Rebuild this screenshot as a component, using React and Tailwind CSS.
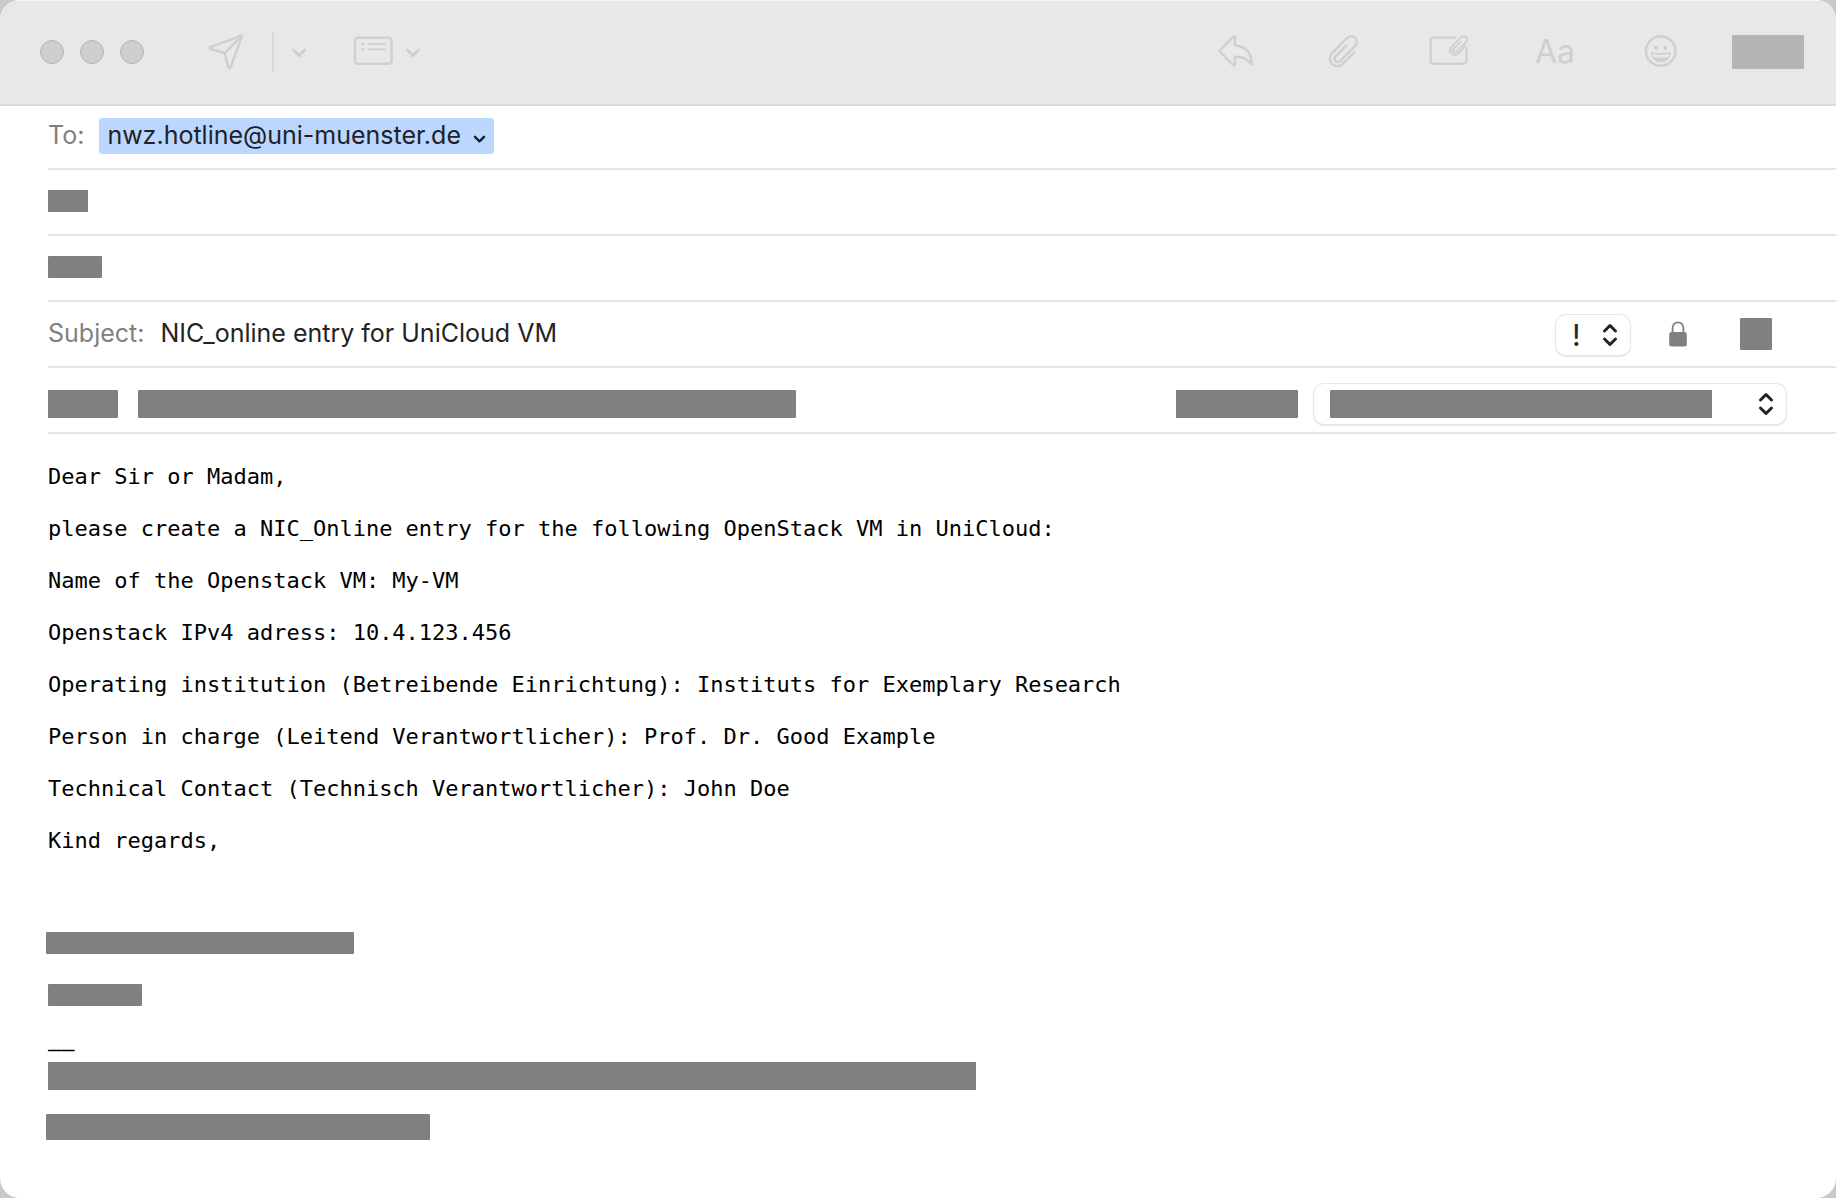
import React, { useState } from 'react';

const bodyLines = [
    'Dear Sir or Madam,',
    'please create a NIC_Online entry for the following OpenStack VM in UniCloud:',
    'Name of the Openstack VM: My-VM',
    'Openstack IPv4 adress: 10.4.123.456',
    'Operating institution (Betreibende Einrichtung): Instituts for Exemplary Research',
    'Person in charge (Leitend Verantwortlicher): Prof. Dr. Good Example',
    'Technical Contact (Technisch Verantwortlicher): John Doe',
    'Kind regards,',
];

const CLIP_PATH = 'M31.3 20.4 L19 32.4 A7.4 7.4 0 0 1 8.4 22.2 L24 6 A5.6 5.6 0 0 1 32.2 13.8 L17.2 29 A3.2 3.2 0 0 1 12.4 24.6 L23.6 13.4';

// Every toolbar icon is drawn on the same 40px grid
function ToolIcon({ children }) {
    return (
        <svg className="size-10" viewBox="0 0 40 40" fill="none" stroke="currentColor" strokeWidth="2.4" strokeLinecap="round" strokeLinejoin="round" aria-hidden="true">
            {children}
        </svg>
    );
}

function Chevron({ className }) {
    return (
        <svg className={className} viewBox="0 0 16 16" fill="none" stroke="currentColor" strokeWidth="3" strokeLinecap="round" strokeLinejoin="round" aria-hidden="true">
            <path d="M2.4 6 L8 11.6 L13.6 6" />
        </svg>
    );
}

function UpDown({ className }) {
    return (
        <svg className={className} viewBox="0 0 16 24" fill="none" stroke="currentColor" strokeWidth="3" strokeLinecap="round" strokeLinejoin="round" aria-hidden="true">
            <path d="M2.5 8 L8 2.5 L13.5 8 M2.5 16 L8 21.5 L13.5 16" />
        </svg>
    );
}

// Blanked out text
function Redacted({ className }) {
    return <div className={`shrink-0 rounded-[1px] bg-[#7f8081] ${className}`} />;
}

function Toolbar() {
    return (
        <header className="flex items-center border-b-2 border-[#d9d9d9] bg-[#e8e8e8] py-8 pl-10 pr-8 text-[#cfcfcf] shadow-[inset_0_1px_0_#f6f6f6]">
            <div className="flex gap-4">
                <button aria-label="Close" className="size-6 rounded-full border border-[#b6b6b6] bg-[#cfcfcf]" />
                <button aria-label="Minimize" className="size-6 rounded-full border border-[#b6b6b6] bg-[#cfcfcf]" />
                <button aria-label="Zoom" className="size-6 rounded-full border border-[#b6b6b6] bg-[#cfcfcf]" />
            </div>
            <button aria-label="Send" className="ml-[62px]">
                <ToolIcon>
                    <path d="M36.2 3.4 L4.2 15.2 Q3 16.3 4.5 17 L18.7 21 L22.4 35.4 Q23.6 37 24.7 35.4 Z" />
                    <path d="M18.7 21 L36 3.6" />
                </ToolIcon>
            </button>
            <div className="ml-[26px] h-10 w-0.5 bg-[#dadada]" />
            <button aria-label="Send options" className="ml-[17px]">
                <Chevron className="size-4" />
            </button>
            <button aria-label="Header fields" className="ml-[46px]">
                <ToolIcon>
                    <rect x="2" y="5.8" width="36.6" height="26" rx="3" />
                    <path d="M9.2 12.2 H11 M15.6 12.2 H31.6 M9.2 17.4 H11 M15.6 17.4 H31.6" strokeWidth="1.8" />
                </ToolIcon>
            </button>
            <button aria-label="Header field options" className="ml-3">
                <Chevron className="size-4" />
            </button>
            <div className="ml-auto flex items-center gap-[66px]">
                <button aria-label="Reply">
                    <ToolIcon>
                        <path d="M2.4 19 L15.8 5.4 Q18 3.4 18 6 V13.8 C28 13.6 34.9 21 34.9 32.8 C31 26.4 26 24.5 18 24.8 V32 Q18 34.4 15.8 32.6 Z" />
                    </ToolIcon>
                </button>
                <button aria-label="Attach file">
                    <ToolIcon>
                        <path d={CLIP_PATH} />
                    </ToolIcon>
                </button>
                <button aria-label="Include attachments">
                    <ToolIcon>
                        <path d="M25.5 5.6 H5 A3.4 3.4 0 0 0 1.6 9 V28.4 A3.4 3.4 0 0 0 5 31.8 H34.2 A3.4 3.4 0 0 0 37.6 28.4 V17" />
                        <path d={CLIP_PATH} transform="translate(16.8 1.4) scale(.63)" strokeWidth="3" />
                    </ToolIcon>
                </button>
                <button aria-label="Format" className="flex w-10 justify-center text-[32px] leading-10">Aa</button>
                <button aria-label="Emoji">
                    <ToolIcon>
                        <circle cx="19.7" cy="19" r="14.8" />
                        <ellipse cx="15" cy="15.7" rx="1.9" ry="2.3" fill="currentColor" stroke="none" />
                        <ellipse cx="24.4" cy="15.7" rx="1.9" ry="2.3" fill="currentColor" stroke="none" />
                        <path d="M10.6 20.8 Q19.8 23.2 29 20.8 C28.6 27 24.4 29.6 19.8 29.6 S11 27 10.6 20.8 Z" strokeWidth="1.4" />
                        <path d="M11.8 24.8 Q19.8 27 27.8 24.8 C26.4 28.2 23.4 29.4 19.8 29.4 S13.2 28.2 11.8 24.8 Z" fill="currentColor" stroke="none" />
                    </ToolIcon>
                </button>
            </div>
            <div className="ml-[51px] h-[34px] w-[72px] shrink-0 rounded-[1px] bg-[#b4b5b7]" />
        </header>
    );
}

function App() {
    const [subject, setSubject] = useState('NIC_online entry for UniCloud VM');

    return (
        <div className="min-h-screen bg-[#c9c9c9] font-['Inter',sans-serif]">
            <div className="min-h-screen overflow-hidden rounded-[20px] bg-white pb-14">
                <Toolbar />
                <div className="ml-12 text-[25px] text-[#808080]">
                    <div className="flex h-16 items-center gap-[15px] border-b-2 border-[#e5e5e5] pb-0.5">
                        <span>To:</span>
                        <button className="flex h-9 items-center rounded bg-[#bbd6ff] px-2 text-[#1f2226]">
                            nwz.hotline@uni-muenster.de
                            <Chevron className="ml-3 mt-1 size-[13px]" />
                        </button>
                    </div>
                    <div className="flex h-[66px] items-center border-b-2 border-[#e5e5e5] pb-0.5">
                        <Redacted className="h-[22px] w-10" />
                    </div>
                    <div className="flex h-[66px] items-center border-b-2 border-[#e5e5e5] pb-0.5">
                        <Redacted className="h-[22px] w-[54px]" />
                    </div>
                    <div className="flex h-[66px] items-center border-b-2 border-[#e5e5e5] pr-16">
                        <label htmlFor="subject">Subject:</label>
                        <input
                            type="text"
                            id="subject"
                            value={subject}
                            onChange={(e) => setSubject(e.target.value)}
                            className="ml-4 min-w-0 flex-1 bg-transparent text-[#232323] focus:outline-none"
                        />
                        <div className="relative pt-0.5">
                            <select aria-label="Priority" defaultValue="!" className="block h-10 w-[74px] appearance-none rounded-[10px] bg-white pl-4 text-[30px] leading-10 text-[#232323] shadow-[0_0_0_1px_#e8e8e8,0_1px_2px_#a8a8a8]">
                                <option>!</option>
                            </select>
                            <UpDown className="pointer-events-none absolute right-3 top-2.5 h-6 w-4 text-[#232323]" />
                        </div>
                        <button aria-label="Encrypt" className="ml-[39px]">
                            <svg className="h-[26px] w-[18px]" viewBox="0 0 18 26" aria-hidden="true">
                                <path d="M3.6 12 V6.8 A5.4 5.4 0 0 1 14.4 6.8 V12" fill="none" stroke="currentColor" strokeWidth="1.8" />
                                <rect x="0.2" y="11" width="17.6" height="14.6" rx="2.4" fill="currentColor" />
                            </svg>
                        </button>
                        <Redacted className="ml-[53px] size-8" />
                    </div>
                    <div className="flex h-[66px] items-center border-b-2 border-[#e5e5e5] pr-[50px] pt-2">
                        <Redacted className="h-7 w-[70px]" />
                        <Redacted className="ml-5 h-7 w-[658px]" />
                        <Redacted className="ml-auto h-7 w-[122px]" />
                        <div className="relative ml-4">
                            <select aria-label="Signature" className="block h-10 w-[472px] appearance-none rounded-[10px] bg-white shadow-[0_0_0_1px_#e8e8e8,0_1px_2px_#a8a8a8]" />
                            <Redacted className="pointer-events-none absolute left-4 top-1.5 h-7 w-[382px]" />
                            <UpDown className="pointer-events-none absolute right-3 top-2 h-6 w-4 text-[#232323]" />
                        </div>
                    </div>
                </div>
                <main className="px-12 pt-[30px] font-['DejaVu_Sans_Mono',monospace] text-[22px] leading-[26px] text-black">
                    <div className="flex flex-col gap-[26px]">
                        {bodyLines.map((line) => (
                            <p key={line}>{line}</p>
                        ))}
                    </div>
                    <Redacted className="-ml-0.5 mt-[78px] h-[22px] w-[308px]" />
                    <Redacted className="mt-[30px] h-[22px] w-[94px]" />
                    <p className="mt-[30px]">––</p>
                    <Redacted className="h-7 w-[928px]" />
                    <Redacted className="-ml-0.5 mt-6 h-[26px] w-[384px]" />
                </main>
            </div>
        </div>
    );
}

export default App;
